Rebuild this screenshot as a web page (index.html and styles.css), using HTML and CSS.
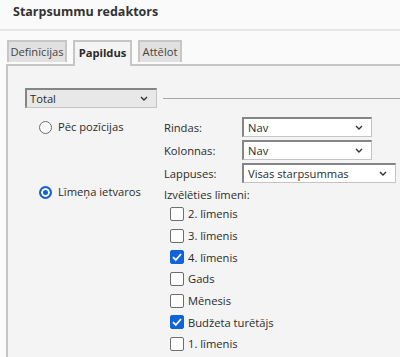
FILE: index.html
```html
<!DOCTYPE html>
<html lang="lv">
<head>
    <meta charset="UTF-8">
    <meta name="viewport" content="width=device-width, initial-scale=1.0">
    <title>Starpsummu redaktors</title>
    <link rel="stylesheet" href="styles.css">
</head>
<body>
    <div class="dialog">
        <header class="dialog-header">
            <h1>Starpsummu redaktors</h1>
        </header>

        <nav class="tabs">
            <div class="tab tab-def">Definīcijas</div>
            <div class="tab tab-active">Papildus</div>
            <div class="tab tab-att">Attēlot</div>
        </nav>

        <section class="panel">
            <div class="group-head">
                <div class="dropdown dropdown-total">
                    <span>Total</span>
                    <svg class="chevron" viewBox="0 0 8 5"><path d="M1 1 L4 4 L7 1"/></svg>
                </div>
                <div class="group-line"></div>
            </div>

            <div class="options">
                <label class="radio-cell radio-top">
                    <span class="radio"></span>
                    Pēc pozīcijas
                </label>

                <div class="fields">
                    <span class="field-label">Rindas:</span>
                    <div class="dropdown dropdown-short">
                        <span>Nav</span>
                        <svg class="chevron" viewBox="0 0 8 5"><path d="M1 1 L4 4 L7 1"/></svg>
                    </div>
                    <span class="field-label">Kolonnas:</span>
                    <div class="dropdown dropdown-short">
                        <span>Nav</span>
                        <svg class="chevron" viewBox="0 0 8 5"><path d="M1 1 L4 4 L7 1"/></svg>
                    </div>
                    <span class="field-label">Lappuses:</span>
                    <div class="dropdown dropdown-long">
                        <span>Visas starpsummas</span>
                        <svg class="chevron" viewBox="0 0 8 5"><path d="M1 1 L4 4 L7 1"/></svg>
                    </div>
                </div>

                <label class="radio-cell radio-bottom">
                    <span class="radio checked"></span>
                    Līmeņa ietvaros
                </label>

                <div class="levels">
                    <div class="levels-title">Izvēlēties līmeni:</div>
                    <div class="check-row"><span class="checkbox"></span>2. līmenis</div>
                    <div class="check-row"><span class="checkbox"></span>3. līmenis</div>
                    <div class="check-row"><span class="checkbox checked"><svg viewBox="0 0 14 14"><path d="M3 7.2 L5.8 10 L11 4"/></svg></span>4. līmenis</div>
                    <div class="check-row"><span class="checkbox"></span>Gads</div>
                    <div class="check-row"><span class="checkbox"></span>Mēnesis</div>
                    <div class="check-row"><span class="checkbox checked"><svg viewBox="0 0 14 14"><path d="M3 7.2 L5.8 10 L11 4"/></svg></span>Budžeta turētājs</div>
                    <div class="check-row"><span class="checkbox"></span>1. līmenis</div>
                </div>
            </div>
        </section>
    </div>
</body>
</html>
```

FILE: styles.css
```css
* {
    box-sizing: border-box;
    margin: 0;
    padding: 0;
}

html, body {
    height: 100%;
}

body {
    background: #fafafa;
    color: #2b2b2b;
    font-family: 'Segoe UI', 'Open Sans', sans-serif;
    font-size: 11.2px;
    overflow: hidden;
}

.dialog {
    height: 357px;
    display: flex;
    flex-direction: column;
}

.dialog-header {
    height: 31px;
    padding: 4px 0 0 13px;
    border-bottom: 2px solid #e6e6e6;
}

.dialog-header h1 {
    font-size: 12.5px;
    font-weight: 700;
    line-height: 16px;
    color: #333;
}

.tabs {
    display: flex;
    align-items: flex-end;
    gap: 6px;
    padding: 9px 0 0 7px;
    position: relative;
    z-index: 1;
}

.tab {
    height: 22px;
    margin-bottom: 2px;
    background: #e1e1e1;
    border: 2px solid #c6c6c6;
    border-bottom: none;
    display: flex;
    align-items: center;
    justify-content: center;
    color: #444;
    line-height: 16px;
}

.tab-def {
    width: 60px;
}

.tab-att {
    width: 44px;
}

.tab-active {
    width: 59px;
    height: 26px;
    margin-bottom: -2px;
    background: #f4f4f4;
    font-weight: 700;
    color: #2b2b2b;
    padding-bottom: 2px;
}

.panel {
    flex: 1;
    margin-left: 6px;
    background: #f4f4f4;
    border-top: 2px solid #c6c6c6;
    border-left: 2px solid #c6c6c6;
    padding: 22px 0 0 17px;
}

.group-head {
    display: flex;
    align-items: center;
}

.group-line {
    flex: 1;
    height: 1px;
    margin-left: 6px;
    background: #a6a6a6;
}

.dropdown {
    height: 20px;
    display: flex;
    align-items: center;
    justify-content: space-between;
    padding: 0 8px 0 4px;
    background: #fff;
    border: 1px solid #c4c4c4;
    border-top: 2px solid #858585;
    border-left: 2px solid #858585;
    line-height: 16px;
}

.dropdown-total {
    width: 132px;
    background: #e8e8e8;
    padding-left: 3px;
}

.dropdown-short {
    width: 130px;
}

.dropdown-long {
    width: 154px;
}

.chevron {
    width: 8px;
    height: 5px;
    fill: none;
    stroke: #333;
    stroke-width: 1.4;
}

.options {
    display: grid;
    grid-template-columns: 139px 1fr;
    margin-top: 9px;
}

.radio-cell {
    display: flex;
    align-items: center;
    gap: 6px;
    padding-left: 14px;
    align-self: start;
    line-height: 16px;
}

.radio-top {
    height: 20px;
}

.radio-bottom {
    height: 18px;
}

.radio {
    width: 13px;
    height: 13px;
    border-radius: 50%;
    border: 1.5px solid #6e6e6e;
    background: #fafafa;
}

.radio.checked {
    border: 2px solid #0f62d6;
    background: #0f62d6;
    box-shadow: inset 0 0 0 2px #fff;
}

.fields {
    display: grid;
    grid-template-columns: 78px auto;
    row-gap: 3px;
    align-items: center;
    justify-items: start;
}

.levels {
    margin-top: 3px;
}

.levels-title {
    line-height: 17px;
}

.check-row {
    height: 21.7px;
    display: flex;
    align-items: center;
    gap: 4px;
    padding-left: 6px;
}

.checkbox {
    width: 14px;
    height: 14px;
    border: 1.5px solid #6e6e6e;
    border-radius: 2px;
    background: #fdfdfd;
    display: flex;
}

.checkbox.checked {
    background: #1064d8;
    border-color: #1064d8;
}

.checkbox svg {
    fill: none;
    stroke: #fff;
    stroke-width: 1.8;
    margin: -1.5px;
    width: 14px;
    height: 14px;
}
```
